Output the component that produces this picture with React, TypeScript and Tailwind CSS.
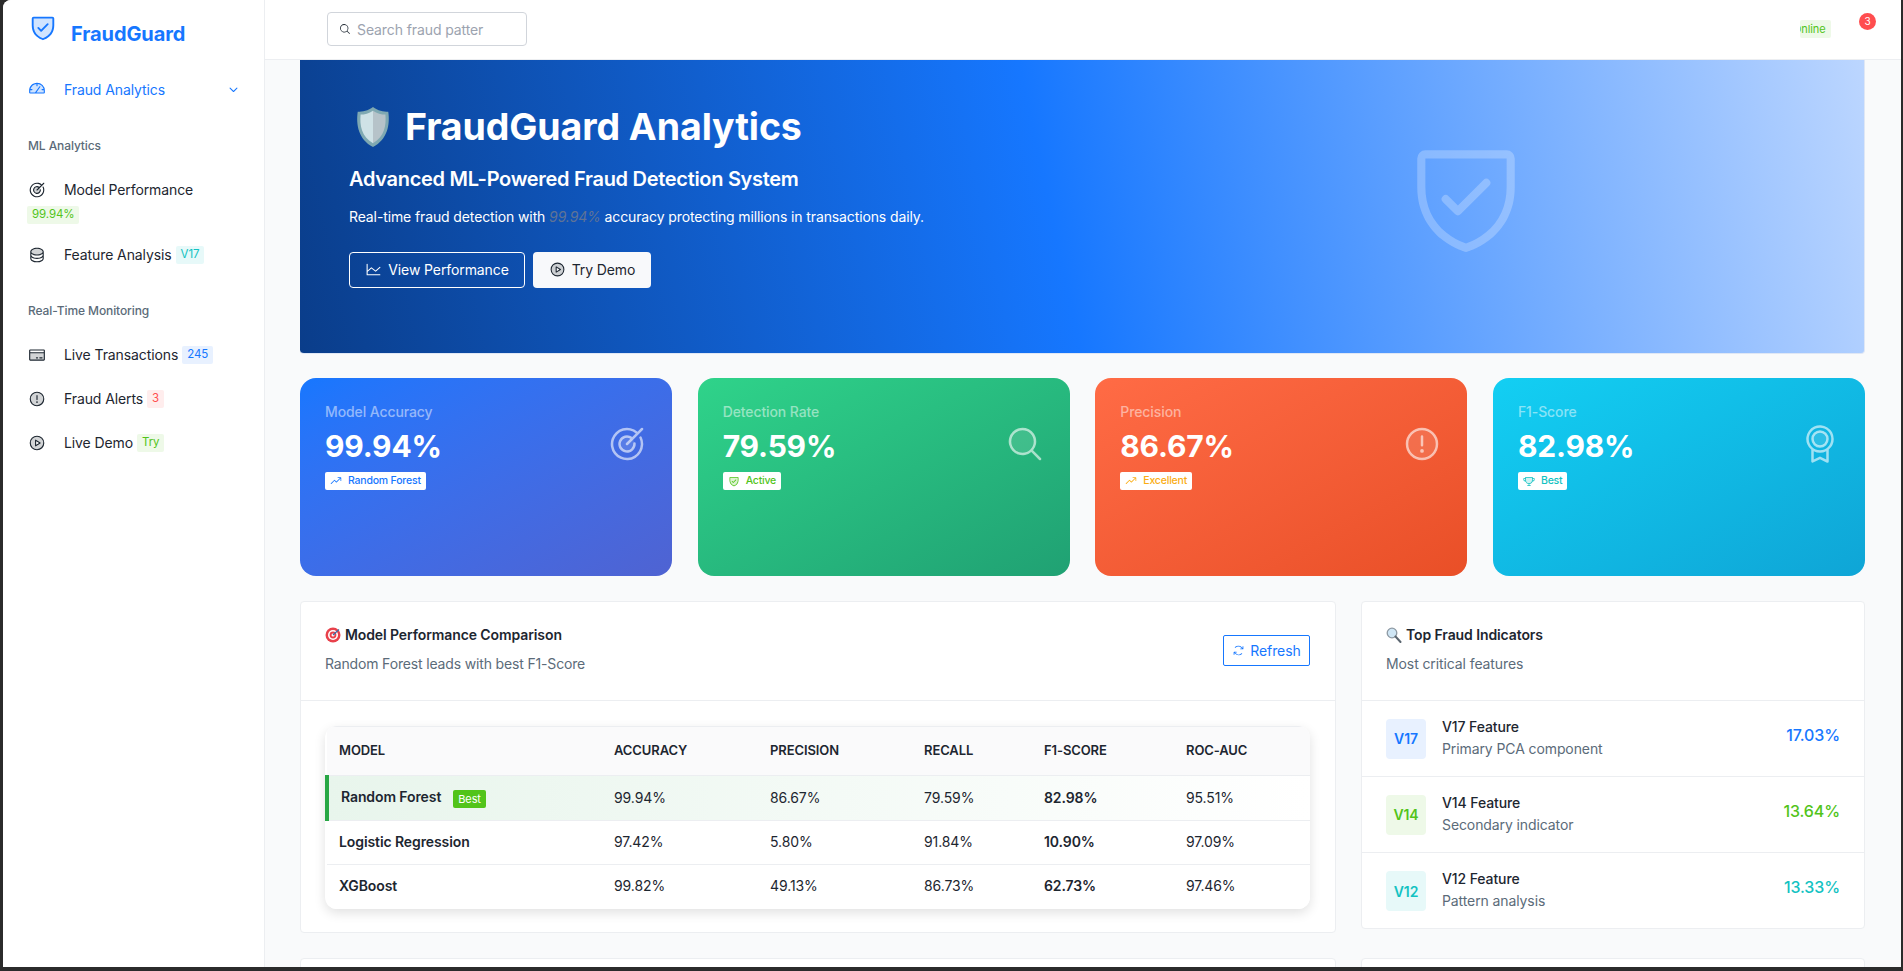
import type { ReactNode } from 'react';
import {
  PiArrowsClockwise,
  PiCaretDownBold,
  PiChartLine,
  PiCreditCardDuotone,
  PiDatabaseDuotone,
  PiGaugeDuotone,
  PiMagnifyingGlass,
  PiMagnifyingGlassDuotone,
  PiMedalDuotone,
  PiPlayCircleDuotone,
  PiShieldCheck,
  PiShieldCheckDuotone,
  PiTargetDuotone,
  PiTrendUp,
  PiTrophyDuotone,
  PiWarningCircleDuotone,
} from 'react-icons/pi';

const badgeTones = {
  blue: 'bg-[#e8f1ff] text-[#1677ff]',
  green: 'bg-[#eef9e8] text-[#52c41a]',
  cyan: 'bg-[#e7f9f9] text-[#13c2c2]',
  red: 'bg-[#ffeded] text-[#ff4d4f]',
};

type Tone = keyof typeof badgeTones;

function NavItem({ icon, label, badge, tone, className }: { icon: ReactNode; label: string; badge: string; tone: Tone; className: string }) {
  return (
    <div className={`flex flex-wrap items-center gap-y-[6px] text-[14px] text-[#1d2630] ${className}`}>
      <span className="flex w-[37px] text-[18px] pl-px">{icon}</span>
      <span className="mr-1">{label}</span>
      <span className={`px-[5px] h-[18px] flex items-center rounded-[2px] text-[11.5px] ${badgeTones[tone]}`}>{badge}</span>
    </div>
  );
}

function Sidebar() {
  return (
    <aside className="w-[262px] shrink-0 border-r border-[#eceef1] bg-white pl-[24px] flex flex-col">
      <div className="flex items-start h-[60px] pt-[12px]">
        <PiShieldCheckDuotone className="text-[30px] text-[#1677ff] ml-px" />
        <span className="ml-[13px] mt-[10px] text-[20px] leading-[24px] font-bold text-[#1677ff]">FraudGuard</span>
      </div>
      <div className="mt-[19px] flex items-center h-5 text-[14px] text-[#1677ff] pr-[25px]">
        <PiGaugeDuotone className="text-[18px] ml-px mr-[18px]" />
        <span className="flex-1">Fraud Analytics</span>
        <PiCaretDownBold className="text-[11px]" />
      </div>
      <div className="mt-[39px] ml-px text-[12px] leading-4 font-medium text-[#5b6b79]">ML Analytics</div>
      <NavItem className="mt-[25px] w-[190px]" icon={<PiTargetDuotone />} label="Model Performance" badge="99.94%" tone="green" />
      <NavItem className="mt-[20px]" icon={<PiDatabaseDuotone />} label="Feature Analysis" badge="V17" tone="cyan" />
      <div className="mt-[38px] ml-px text-[12px] leading-4 font-medium text-[#5b6b79]">Real-Time Monitoring</div>
      <NavItem className="mt-[25px]" icon={<PiCreditCardDuotone />} label="Live Transactions" badge="245" tone="blue" />
      <NavItem className="mt-[23px]" icon={<PiWarningCircleDuotone />} label="Fraud Alerts" badge="3" tone="red" />
      <NavItem className="mt-[23px]" icon={<PiPlayCircleDuotone />} label="Live Demo" badge="Try" tone="green" />
    </aside>
  );
}

function Header() {
  return (
    <header className="h-[60px] shrink-0 bg-white border-b border-[#eceef1] flex items-start pl-[62px] pr-[25px]">
      <div className="mt-[12px] w-[200px] h-[34px] border border-[#d1d5db] rounded flex items-center px-[11px] text-[14px] text-[#9ca3af]">
        <PiMagnifyingGlass className="text-[12px] text-[#1d2630] mr-[6px]" />
        <span>Search fraud patter</span>
      </div>
      <div className="ml-auto mt-[20px] w-[31px] h-[18px] bg-[#eef9e8] rounded-[2px] text-[11px] leading-[18px] text-[#52c41a] overflow-hidden whitespace-nowrap pr-[5px]">
        <span className="inline-block -ml-[7px]">Online</span>
      </div>
      <div className="ml-[28px] mt-[13px] w-[17px] h-[17px] rounded-full bg-[#ff4d4f] text-white text-[10px] leading-[17px] text-center">3</div>
    </header>
  );
}

function HeroShield() {
  return (
    <svg viewBox="0 0 36 44" className="w-[36px] h-[42px] shrink-0">
      <path d="M18 1 C23 5 29 6 34 6 C36 20 33 35 18 43 C3 35 0 20 2 6 C7 6 13 5 18 1Z" fill="#7fa9b2" />
      <path d="M18 5 C22 8 27 9 31 9 C32 21 30 32 18 39Z" fill="#b6c3c9" />
      <path d="M18 5 C14 8 9 9 5 9 C4 21 6 32 18 39Z" fill="#cfe2e6" />
    </svg>
  );
}

function Hero() {
  return (
    <section className="h-[294px] shrink-0 flex rounded-b-[4px] border-r border-b border-[#dfe7f5] bg-[linear-gradient(78deg,#0a3d8a_0%,#1677ff_48%,#bcd6ff_100%)] pl-[49px]">
      <div className="flex-1 pt-[47px]">
        <div className="flex items-center gap-[14px] h-[40px] ml-[6px] text-white">
          <HeroShield />
          <h1 className="text-[37.5px] leading-[40px] font-bold">FraudGuard Analytics</h1>
        </div>
        <h2 className="mt-[20px] text-[20px] leading-[24px] font-semibold tracking-[-0.3px] text-white">Advanced ML-Powered Fraud Detection System</h2>
        <p className="mt-[16px] text-[14px] leading-[20px] tracking-[-0.12px] text-white">
          Real-time fraud detection with <em className="text-[#5f7396]">99.94%</em> accuracy protecting millions in transactions daily.
        </p>
        <div className="mt-[25px] flex gap-2 text-[14px]">
          <div className="w-[176px] h-[36px] pb-[2px] border border-white rounded-[4px] flex items-center justify-center gap-[6px] text-white">
            <PiChartLine className="text-[17px]" />
            View Performance
          </div>
          <div className="w-[118px] h-[36px] pb-[2px] bg-[#f8f9fb] rounded-[4px] flex items-center justify-center gap-[6px] text-[#1d2630]">
            <PiPlayCircleDuotone className="text-[17px]" />
            Try Demo
          </div>
        </div>
      </div>
      <div className="w-[796px] flex items-center justify-center pb-[24px]">
        <PiShieldCheck className="text-[130px] text-white/25" />
      </div>
    </section>
  );
}

const stats = [
  { title: 'Model Accuracy', value: '99.94%', tag: 'Random Forest', gradient: 'from-[#1677ff] to-[#4f63d2]', text: 'text-[#1677ff]', icon: <PiTargetDuotone />, tagIcon: <PiTrendUp /> },
  { title: 'Detection Rate', value: '79.59%', tag: 'Active', gradient: 'from-[#2fd38a] to-[#20a173]', text: 'text-[#52c41a]', icon: <PiMagnifyingGlassDuotone />, tagIcon: <PiShieldCheckDuotone /> },
  { title: 'Precision', value: '86.67%', tag: 'Excellent', gradient: 'from-[#ff6b45] to-[#e94f27]', text: 'text-[#faad14]', icon: <PiWarningCircleDuotone />, tagIcon: <PiTrendUp /> },
  { title: 'F1-Score', value: '82.98%', tag: 'Best', gradient: 'from-[#13cff3] to-[#0fa5d6]', text: 'text-[#13c2c2]', icon: <PiMedalDuotone />, tagIcon: <PiTrophyDuotone /> },
];

function StatCards() {
  return (
    <div className="mt-[24px] grid grid-cols-4 gap-[25.6px]">
      {stats.map((s) => (
        <div key={s.title} className={`h-[198px] rounded-[16px] bg-gradient-to-br ${s.gradient} pl-[25px] pr-[25px] pt-[24px] flex justify-between`}>
          <div>
            <div className="text-[14px] leading-[20px] font-medium text-white/50">{s.title}</div>
            <div className="mt-[5px] text-[30px] leading-[38px] font-bold tracking-[-0.2px] text-white">{s.value}</div>
            <div className={`mt-[7px] inline-flex items-center gap-[6px] h-[18px] px-[5px] rounded-[2px] bg-white text-[10.5px] font-medium tracking-[-0.2px] ${s.text}`}>
              <span className="text-[12px]">{s.tagIcon}</span>
              {s.tag}
            </div>
          </div>
          <div className="mt-[22px] text-[40px] h-[40px] text-white/60">{s.icon}</div>
        </div>
      ))}
    </div>
  );
}

const rows = [
  ['Logistic Regression', '97.42%', '5.80%', '91.84%', '10.90%', '97.09%'],
  ['XGBoost', '99.82%', '49.13%', '86.73%', '62.73%', '97.46%'],
];

function ModelTable() {
  return (
    <div className="rounded-[12px] overflow-hidden shadow-[0_4px_12px_rgba(0,0,0,0.12)]">
      <table className="w-full table-fixed text-[14px] text-[#1d2630] [&_td]:pb-[2px]">
        <colgroup>
          <col className="w-[275px]" />
          <col className="w-[155px]" />
          <col className="w-[155px]" />
          <col className="w-[120px]" />
          <col className="w-[142px]" />
          <col />
        </colgroup>
        <thead>
          <tr className="h-[49px] bg-[#fafafb] border-t border-b border-[#eceef1] text-left text-[13px] font-semibold">
            <th className="pl-[12px] font-semibold">MODEL</th>
            <th className="pl-[12px] font-semibold">ACCURACY</th>
            <th className="pl-[13px] font-semibold">PRECISION</th>
            <th className="pl-[12px] font-semibold">RECALL</th>
            <th className="pl-[12px] font-semibold">F1-SCORE</th>
            <th className="pl-[12px] font-semibold">ROC-AUC</th>
          </tr>
        </thead>
        <tbody>
          <tr className="h-[45px] border-b border-[#eceef1] bg-[linear-gradient(90deg,#e8f5ec_0%,#ffffff_100%)]">
            <td className="border-l-[4px] border-[#28a745] pl-[12px]">
              <span className="font-semibold">Random Forest</span>
              <span className="ml-3 inline-block align-middle px-[5px] h-[18px] leading-[18px] rounded-[2px] bg-[#52c41a] text-white text-[11px]">Best</span>
            </td>
            <td className="pl-[12px]">99.94%</td>
            <td className="pl-[13px]">86.67%</td>
            <td className="pl-[12px]">79.59%</td>
            <td className="pl-[12px] font-semibold">82.98%</td>
            <td className="pl-[12px]">95.51%</td>
          </tr>
          {rows.map((r, i) => (
            <tr key={r[0]} className={`h-[44px] bg-white ${i === 0 ? 'border-b border-[#eceef1]' : ''}`}>
              <td className="pl-[12px] font-semibold">{r[0]}</td>
              <td className="pl-[12px]">{r[1]}</td>
              <td className="pl-[13px]">{r[2]}</td>
              <td className="pl-[12px]">{r[3]}</td>
              <td className="pl-[12px] font-semibold">{r[4]}</td>
              <td className="pl-[12px]">{r[5]}</td>
            </tr>
          ))}
        </tbody>
      </table>
    </div>
  );
}

function TargetEmoji() {
  return (
    <svg viewBox="0 0 16 16" className="w-4 h-4 shrink-0">
      <circle cx="8" cy="8" r="7.5" fill="#e8414b" />
      <circle cx="8" cy="8" r="5" fill="#fff" />
      <circle cx="8" cy="8" r="3.4" fill="#e8414b" />
      <circle cx="8" cy="8" r="1.5" fill="#fff" />
      <path d="M8 8 L14 2.5" stroke="#3b6ea8" strokeWidth="1.2" />
    </svg>
  );
}

function GlassEmoji() {
  return (
    <svg viewBox="0 0 16 16" className="w-4 h-4 shrink-0">
      <circle cx="6" cy="6" r="4.8" fill="#cfe6f5" stroke="#8d99a3" strokeWidth="1.3" />
      <path d="M9.5 9.5 L14.5 15" stroke="#5b6670" strokeWidth="2" strokeLinecap="round" />
    </svg>
  );
}

const indicators = [
  { code: 'V17', name: 'V17 Feature', note: 'Primary PCA component', value: '17.03%', tone: 'blue' as Tone },
  { code: 'V14', name: 'V14 Feature', note: 'Secondary indicator', value: '13.64%', tone: 'green' as Tone },
  { code: 'V12', name: 'V12 Feature', note: 'Pattern analysis', value: '13.33%', tone: 'cyan' as Tone },
];

const valueTones = { blue: 'text-[#1677ff]', green: 'text-[#52c41a]', cyan: 'text-[#13c2c2]', red: 'text-[#ff4d4f]' };

function Panels() {
  return (
    <div className="mt-[25px] flex items-start gap-[25px]">
      <div className="w-[1036px] h-[332px] shrink-0 bg-white border border-[#eceef1] rounded-[4px]">
        <div className="h-[99px] border-b border-[#eceef1] pl-[24px] pr-[25px] flex items-start justify-between">
          <div className="pt-[23px]">
            <div className="flex items-center gap-[4px] text-[14px] leading-[20px] font-semibold text-[#1d2630]">
              <TargetEmoji />
              Model Performance Comparison
            </div>
            <div className="mt-[9px] text-[14px] leading-[20px] tracking-[-0.16px] text-[#5b6b79]">Random Forest leads with best F1-Score</div>
          </div>
          <div className="mt-[33px] w-[87px] h-[31px] pb-px border border-[#1677ff] rounded-[2px] flex items-center justify-center gap-[5px] text-[14px] text-[#1677ff]">
            <PiArrowsClockwise className="text-[13px]" />
            Refresh
          </div>
        </div>
        <div className="pt-[25px] pl-[24px] pr-[25px]">
          <ModelTable />
        </div>
      </div>
      <div className="flex-1 h-[328px] bg-white border border-[#eceef1] rounded-[4px]">
        <div className="h-[99px] border-b border-[#eceef1] pl-[24px] pt-[23px]">
          <div className="flex items-center gap-[4px] text-[14px] leading-[20px] font-semibold text-[#1d2630]">
            <GlassEmoji />
            Top Fraud Indicators
          </div>
          <div className="mt-[9px] text-[14px] leading-[20px] text-[#5b6b79]">Most critical features</div>
        </div>
        {indicators.map((f, i) => (
          <div key={f.code} className={`h-[76px] pl-[24px] pr-[24px] flex items-center ${i < 2 ? 'border-b border-[#eceef1]' : ''}`}>
            <div className={`w-[40px] h-[40px] rounded-[4px] flex items-center justify-center text-[14px] font-semibold ${badgeTones[f.tone]}`}>{f.code}</div>
            <div className="ml-[16px] flex-1 mb-[2px]">
              <div className="text-[14px] leading-[22px] font-medium text-[#1d2630]">{f.name}</div>
              <div className="text-[14px] leading-[22px] text-[#5b6b79]">{f.note}</div>
            </div>
            <div className={`text-[16px] font-medium mb-2 ${valueTones[f.tone]}`}>{f.value}</div>
          </div>
        ))}
      </div>
    </div>
  );
}

function NextPanels() {
  return (
    <div className="mt-[25px] flex gap-[25px]">
      <div className="w-[1036px] h-[40px] shrink-0 bg-white border border-[#eceef1] rounded-[4px]" />
      <div className="flex-1 h-[40px] bg-white border border-[#eceef1] rounded-[4px]" />
    </div>
  );
}

export default function App() {
  return (
    <div className="h-[971px] w-full overflow-hidden bg-[#2b2b2b] pl-[3px] pr-[2px] pb-[4px] tracking-[-0.1px] font-['Inter',sans-serif]">
      <div className="h-full flex overflow-hidden rounded-tl-[8px] bg-[#f9fafb]">
        <Sidebar />
        <div className="flex-1 min-w-0 flex flex-col">
          <Header />
          <main className="flex-1 overflow-hidden pl-[35px] pr-[36px]">
            <Hero />
            <StatCards />
            <Panels />
            <NextPanels />
          </main>
        </div>
      </div>
    </div>
  );
}
